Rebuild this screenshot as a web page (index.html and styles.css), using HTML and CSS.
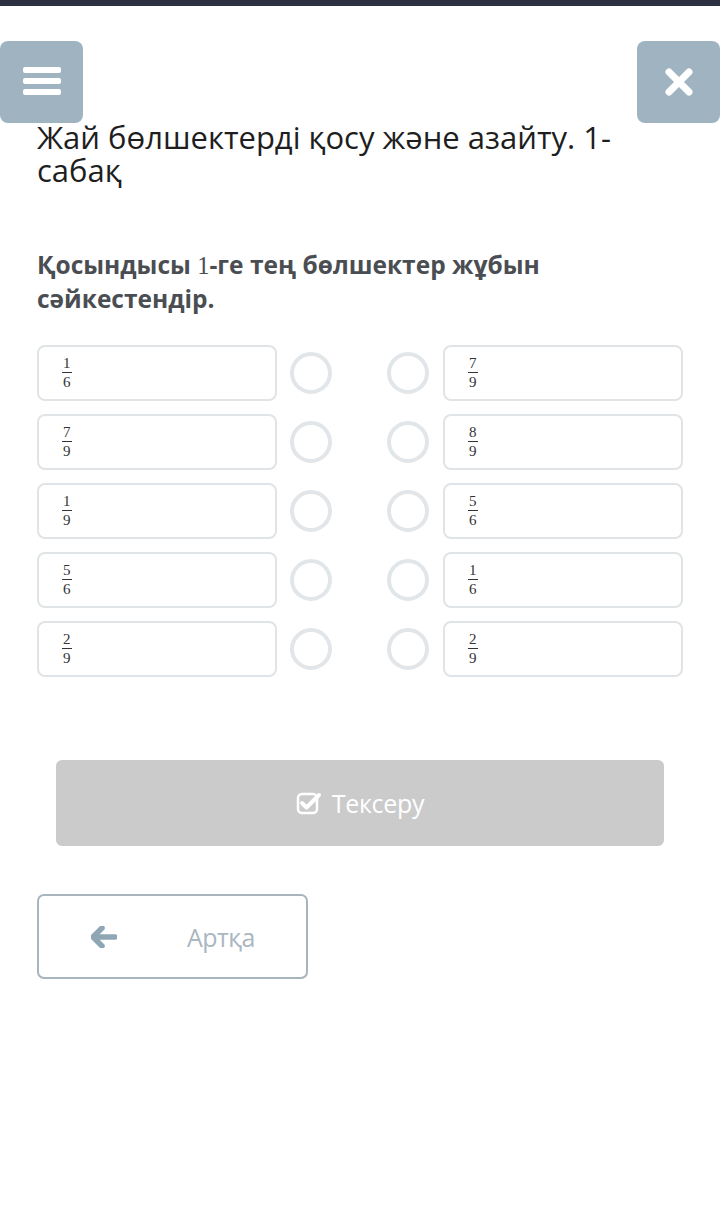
FILE: index.html
```html
<!DOCTYPE html>
<html lang="kk">
<head>
    <meta charset="UTF-8">
    <meta name="viewport" content="width=device-width, initial-scale=1.0">
    <title>Жай бөлшектерді қосу және азайту</title>
    <link rel="stylesheet" href="styles.css">
</head>
<body>

    <div class="top-bar"></div>

    <div class="nav">
        <button class="nav-btn" aria-label="Menu">
            <svg width="40" height="30" viewBox="0 0 40 30">
                <rect x="1" y="0" width="38" height="6" rx="2" fill="#fff"/>
                <rect x="1" y="11" width="38" height="6" rx="2" fill="#fff"/>
                <rect x="1" y="22" width="38" height="6" rx="2" fill="#fff"/>
            </svg>
        </button>
        <button class="nav-btn" aria-label="Close">
            <svg width="28" height="28" viewBox="0 0 28 28">
                <path d="M4 4 L24 24 M24 4 L4 24" stroke="#fff" stroke-width="7" stroke-linecap="round"/>
            </svg>
        </button>
    </div>

    <h1 class="title">Жай бөлшектерді қосу және азайту. 1-сабақ</h1>

    <p class="question">Қосындысы <span class="num">1</span>-ге тең бөлшектер жұбын сәйкестендір.</p>

    <div class="pairs">
        <div class="pair">
            <div class="card"><span class="frac"><span>1</span><span>6</span></span></div>
            <span class="dot"></span>
            <span class="dot"></span>
            <div class="card"><span class="frac"><span>7</span><span>9</span></span></div>
        </div>
        <div class="pair">
            <div class="card"><span class="frac"><span>7</span><span>9</span></span></div>
            <span class="dot"></span>
            <span class="dot"></span>
            <div class="card"><span class="frac"><span>8</span><span>9</span></span></div>
        </div>
        <div class="pair">
            <div class="card"><span class="frac"><span>1</span><span>9</span></span></div>
            <span class="dot"></span>
            <span class="dot"></span>
            <div class="card"><span class="frac"><span>5</span><span>6</span></span></div>
        </div>
        <div class="pair">
            <div class="card"><span class="frac"><span>5</span><span>6</span></span></div>
            <span class="dot"></span>
            <span class="dot"></span>
            <div class="card"><span class="frac"><span>1</span><span>6</span></span></div>
        </div>
        <div class="pair">
            <div class="card"><span class="frac"><span>2</span><span>9</span></span></div>
            <span class="dot"></span>
            <span class="dot"></span>
            <div class="card"><span class="frac"><span>2</span><span>9</span></span></div>
        </div>
    </div>

    <button class="check-btn">
        <svg width="26" height="24" viewBox="0 0 26 24">
            <rect x="2" y="3" width="19" height="19" rx="4" fill="none" stroke="#fff" stroke-width="2.5"/>
            <path d="M6 12 L10.5 16.5 L23 4" fill="none" stroke="#fff" stroke-width="4" stroke-linecap="round" stroke-linejoin="round"/>
        </svg>
        Тексеру
    </button>

    <button class="back-btn">
        <svg width="26" height="22" viewBox="0 0 26 22">
            <path d="M11 2 L2 11 L11 20 M3 11 L24 11" fill="none" stroke="#8fa6b5" stroke-width="5.5" stroke-linecap="round" stroke-linejoin="round"/>
        </svg>
        <span>Артқа</span>
    </button>

</body>
</html>
```

FILE: styles.css
```css
/* Global */
body {
    margin: 0;
    background: #fff;
    font-family: "Open Sans", "Noto Sans", sans-serif;
    color: #222;
}

.top-bar {
    height: 6px;
    background: #2b3140;
}

/* Nav buttons */
.nav {
    display: flex;
    justify-content: space-between;
    margin-top: 35px;
    height: 82px;
}

.nav-btn {
    width: 83px;
    height: 82px;
    border: none;
    border-radius: 8px;
    background: #a0b3c0;
    display: flex;
    align-items: center;
    justify-content: center;
    padding: 0;
}

/* Title */
.title {
    margin: -2px 37px 0;
    font-size: 31px;
    font-weight: 400;
    line-height: 33px;
    color: #1e1e1e;
    max-width: 600px;
}

/* Question */
.question {
    margin: 61px 37px 0;
    font-size: 24.5px;
    font-weight: 700;
    line-height: 33px;
    color: #4a4e53;
    max-width: 560px;
}

.question .num {
    font-family: "Liberation Serif", serif;
    font-weight: 400;
}

/* Pairs */
.pairs {
    margin: 30px 37px 0;
    display: flex;
    flex-direction: column;
    gap: 13px;
}

.pair {
    display: flex;
    align-items: center;
    height: 56px;
}

.card {
    width: 240px;
    height: 56px;
    box-sizing: border-box;
    border: 2px solid #e1e4e6;
    border-radius: 8px;
    display: flex;
    align-items: center;
    padding-left: 23px;
}

.dot {
    width: 42px;
    height: 42px;
    box-sizing: border-box;
    border: 4px solid #e2e6e9;
    border-radius: 50%;
}

.pair .dot:first-of-type {
    margin-left: 13px;
}

.pair .dot + .dot {
    margin-left: 55px;
    margin-right: 14px;
}

.frac {
    display: inline-flex;
    flex-direction: column;
    align-items: center;
    font-family: "Liberation Serif", serif;
    font-size: 15px;
    line-height: 15px;
    color: #333;
}

.frac span:first-child {
    border-bottom: 1px solid #333;
    padding: 0 1px 1px;
}

.frac span:last-child {
    padding-top: 2px;
}

/* Check button */
.check-btn {
    display: flex;
    align-items: center;
    justify-content: center;
    gap: 10px;
    margin: 83px 56px 0;
    width: 608px;
    height: 86px;
    border: none;
    border-radius: 6px;
    background: #cbcbcb;
    color: #fff;
    font-family: "Open Sans", sans-serif;
    font-size: 25px;
    letter-spacing: -0.3px;
}

/* Back button */
.back-btn {
    display: flex;
    align-items: center;
    margin: 48px 37px 0;
    width: 271px;
    height: 85px;
    box-sizing: border-box;
    border: 2px solid #a9b5bd;
    border-radius: 7px;
    background: #fff;
    padding: 0 0 0 52px;
    font-family: "Open Sans", sans-serif;
    font-size: 25px;
    color: #aab6c0;
}

.back-btn span {
    margin-left: 70px;
    letter-spacing: -0.5px;
}
```
